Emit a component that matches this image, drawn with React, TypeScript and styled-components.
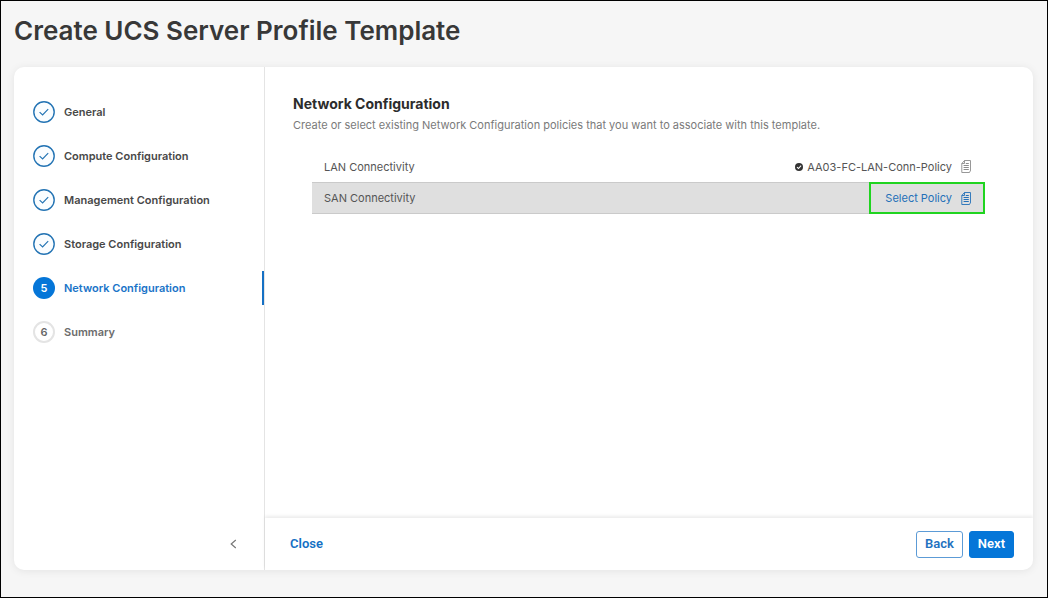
import React from "react";
import styled, { createGlobalStyle, css } from "styled-components";

const GlobalStyle = createGlobalStyle`
  *, *::before, *::after { box-sizing: border-box; }
  body {
    margin: 0;
    background: #f6f6f6;
    color: #4a4a4a;
    font-family: Inter, "Liberation Sans", sans-serif;
    font-size: 11px;
    line-height: 16px;
  }
  button { font-family: inherit; cursor: pointer; }
`;

const Page = styled.div`
  display: flex;
  flex-direction: column;
  min-height: 100vh;
  padding: 13px 14px 27px 13px;
  border: 1px solid #000;
`;

const Title = styled.h1`
  margin: 0 0 19px;
  color: #383838;
  font-size: 26px;
  font-weight: 600;
  line-height: 34px;
`;

const Card = styled.div`
  display: flex;
  flex: 1;
  border-radius: 10px;
  background: #fff;
  box-shadow: 0 1px 8px rgba(0, 0, 0, 0.08);
  overflow: hidden;
`;

const Sidebar = styled.nav`
  display: flex;
  flex: 0 0 251px;
  flex-direction: column;
  justify-content: space-between;
  border-right: 1px solid #e4e4e4;
`;

const Steps = styled.ol`
  display: flex;
  flex-direction: column;
  gap: 10px;
  margin: 0;
  padding: 28px 0 0;
  list-style: none;
`;

type StepState = "done" | "active" | "todo";

const stepColors = { done: "#484848", active: "#1a74c8", todo: "#6c6c6c" };

const Step = styled.button<{ $state: StepState }>`
  display: flex;
  align-items: center;
  gap: 9px;
  width: 100%;
  height: 34px;
  padding: 0 0 0 19px;
  border: 0;
  border-right: 2px solid ${(p) => (p.$state === "active" ? "#1570c4" : "transparent")};
  background: none;
  color: ${(p) => stepColors[p.$state]};
  font-size: 11px;
  font-weight: 600;
  line-height: 16px;
  text-align: left;
`;

const badgeStyles = {
  done: css`
    color: #2474b4;
  `,
  active: css`
    background: #0576d8;
    color: #fff;
  `,
  todo: css`
    border: 2px solid #e4e4e4;
    color: #666;
  `,
};

const Badge = styled.span<{ $state: StepState }>`
  display: flex;
  align-items: center;
  justify-content: center;
  width: 22px;
  height: 22px;
  border-radius: 50%;
  ${(p) => badgeStyles[p.$state]}
`;

const CollapseButton = styled.button`
  display: flex;
  align-self: flex-end;
  margin: 0 23px 17px;
  padding: 4px;
  border: 0;
  background: none;
  color: #777;
`;

const Main = styled.main`
  display: flex;
  flex: 1;
  flex-direction: column;
  min-width: 0;
`;

const Content = styled.section`
  flex: 1;
  padding: 27px 48px 28px 28px;
`;

const Heading = styled.h2`
  margin: 0;
  color: #2c2c2c;
  font-size: 14px;
  font-weight: 700;
  line-height: 20px;
`;

const Description = styled.p`
  margin: 3px 0 0;
  color: #7a7a7a;
`;

const PolicyList = styled.ul`
  margin: 18px 0 0;
  padding: 0 0 0 19px;
  list-style: none;
`;

const PolicyRow = styled.li<{ $selected?: boolean }>`
  display: flex;
  align-items: center;
  justify-content: space-between;
  height: 31px;
  padding-left: 12px;
  color: #555;
  ${(p) =>
    p.$selected &&
    css`
      height: 32px;
      background: #dfdfdf;
      box-shadow: inset 0 1px #cacaca, inset 0 -1px #cacaca;
    `}
`;

const PolicyValue = styled.span`
  display: flex;
  align-items: center;
  gap: 4px;
  padding-right: 13px;
`;

const PolicyIcon = styled.span`
  display: flex;
  margin-left: 5px;
  color: #8c8c8c;
`;

const SelectPolicy = styled.button`
  display: flex;
  align-items: center;
  gap: 9px;
  height: 32px;
  padding: 0 11px 0 14px;
  border: 2px solid #20d420;
  background: none;
  color: #2470b8;
  font-size: 11px;
  line-height: 16px;
`;

const Footer = styled.footer`
  display: flex;
  align-items: center;
  justify-content: space-between;
  height: 52px;
  padding: 0 19px 0 25px;
  box-shadow: 0 -2px 3px rgba(0, 0, 0, 0.08);
`;

const Actions = styled.div`
  display: flex;
  gap: 6px;
`;

const actionStyles = {
  link: css`
    padding: 0;
    border: 0;
    background: none;
    color: #1570c4;
  `,
  outline: css`
    padding: 0 8px;
    border: 1px solid #5c9bd6;
    background: #fff;
    color: #1f72c0;
  `,
  solid: css`
    padding: 0 8px;
    border: 1px solid #0576d8;
    background: #0576d8;
    color: #fff;
  `,
};

const Action = styled.button<{ $kind: keyof typeof actionStyles }>`
  height: 27px;
  border-radius: 3px;
  font-family: Roboto, "Liberation Sans", sans-serif;
  font-size: 13px;
  font-weight: 600;
  line-height: 16px;
  ${(p) => actionStyles[p.$kind]}
`;

const CheckIcon = () => (
  <svg width="22" height="22" viewBox="0 0 22 22" fill="none" stroke="currentColor" aria-hidden="true">
    <circle cx="11" cy="11" r="10.2" fill="#fafdff" strokeWidth="1.4" />
    <path d="M6.6 11.1 9.6 13.9 15.2 8.2" strokeWidth="1.2" />
  </svg>
);

const VerifiedIcon = () => (
  <svg width="8" height="8" viewBox="0 0 8 8" aria-hidden="true">
    <circle cx="4" cy="4" r="4" fill="#333" />
    <path d="M2 4.1 3.5 5.5 6.1 2.7" fill="none" stroke="#fff" strokeWidth="1.1" />
  </svg>
);

const DocumentIcon = () => (
  <svg width="11" height="13" viewBox="0 0 11 13" fill="none" stroke="currentColor" aria-hidden="true">
    <path d="M3.5.5h6v9.5M3.5.5.8 3.5v9h7.7l1.2-2.5M3.5.5v3H.8" strokeWidth=".9" />
    <path d="M4.8 3.5h3M2.6 5.5h5.2M2.6 7.5h5.2M2.6 9.5h5.2" />
  </svg>
);

const ChevronIcon = () => (
  <svg width="7" height="10" viewBox="0 0 7 10" fill="none" stroke="currentColor" strokeWidth="1.2" aria-hidden="true">
    <path d="M5.8 1 1.2 5 5.8 9" />
  </svg>
);

const steps: { label: string; state: StepState }[] = [
  { label: "General", state: "done" },
  { label: "Compute Configuration", state: "done" },
  { label: "Management Configuration", state: "done" },
  { label: "Storage Configuration", state: "done" },
  { label: "Network Configuration", state: "active" },
  { label: "Summary", state: "todo" },
];

export default function App() {
  return (
    <>
      <GlobalStyle />
      <Page>
        <Title>Create UCS Server Profile Template</Title>
        <Card>
          <Sidebar aria-label="Steps">
            <Steps>
              {steps.map(({ label, state }, i) => (
                <li key={label}>
                  <Step type="button" $state={state} aria-current={state === "active" ? "step" : undefined}>
                    <Badge $state={state}>{state === "done" ? <CheckIcon /> : i + 1}</Badge>
                    {label}
                  </Step>
                </li>
              ))}
            </Steps>
            <CollapseButton type="button" aria-label="Collapse steps">
              <ChevronIcon />
            </CollapseButton>
          </Sidebar>
          <Main>
            <Content>
              <Heading>Network Configuration</Heading>
              <Description>
                Create or select existing Network Configuration policies that you want to associate with this template.
              </Description>
              <PolicyList>
                <PolicyRow>
                  LAN Connectivity
                  <PolicyValue>
                    <VerifiedIcon />
                    AA03-FC-LAN-Conn-Policy
                    <PolicyIcon>
                      <DocumentIcon />
                    </PolicyIcon>
                  </PolicyValue>
                </PolicyRow>
                <PolicyRow $selected>
                  SAN Connectivity
                  <SelectPolicy type="button">
                    Select Policy
                    <DocumentIcon />
                  </SelectPolicy>
                </PolicyRow>
              </PolicyList>
            </Content>
            <Footer>
              <Action type="button" $kind="link">Close</Action>
              <Actions>
                <Action type="button" $kind="outline">Back</Action>
                <Action type="button" $kind="solid">Next</Action>
              </Actions>
            </Footer>
          </Main>
        </Card>
      </Page>
    </>
  );
}
